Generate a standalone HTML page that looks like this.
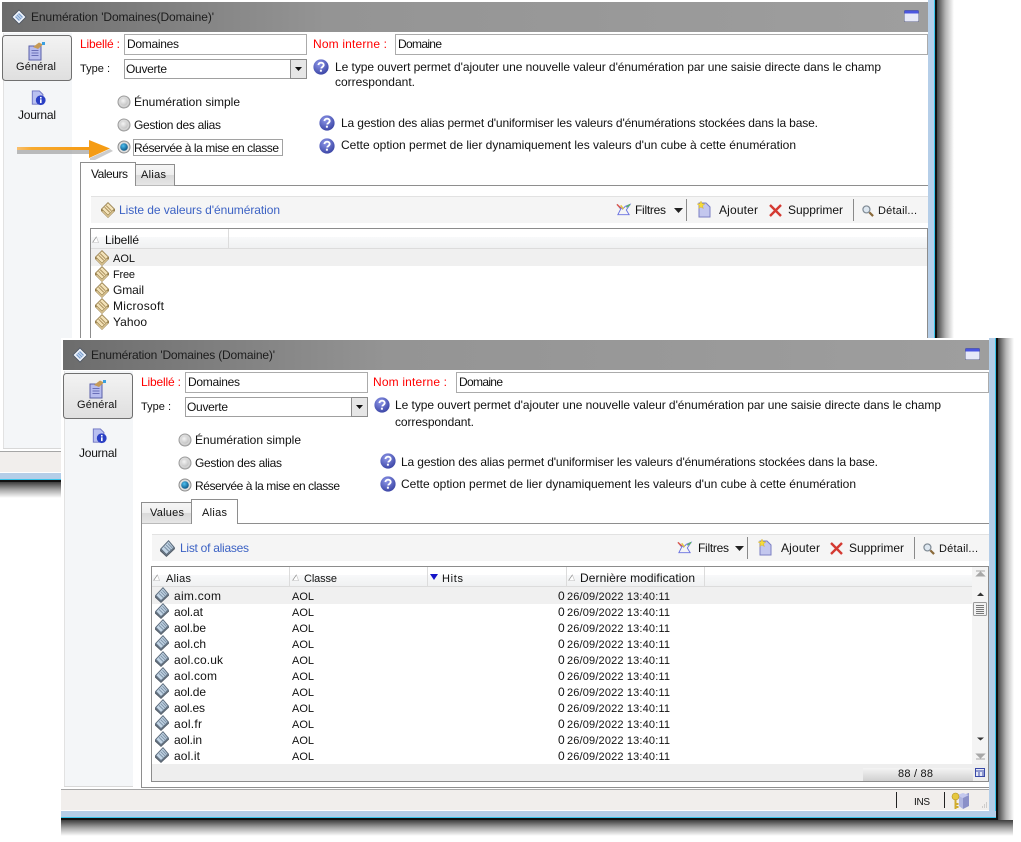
<!DOCTYPE html>
<html lang="fr"><head><meta charset="utf-8"><title>Enumération</title>
<style>
html,body{margin:0;padding:0;background:#fff}
body{width:1021px;height:842px;overflow:hidden}
svg{display:block}
text{font-family:"Liberation Sans",sans-serif;font-size:12px;fill:#111}
text.s{font-size:11px}
.r{fill:#f00}.b{fill:#3c62c4}.t{fill:#1c1c1c}
</style></head><body>
<svg xmlns="http://www.w3.org/2000/svg" width="1021" height="842" viewBox="0 0 1021 842">
<defs>
<linearGradient id="title"><stop offset="0" stop-color="#6c6c6c"/><stop offset=".35" stop-color="#949494"/><stop offset="1" stop-color="#9e9e9e"/></linearGradient>
<linearGradient id="shR"><stop offset="0" stop-color="#454545"/><stop offset=".5" stop-color="#b5b5b5"/><stop offset="1" stop-color="#fff"/></linearGradient>
<linearGradient id="shB" x2="0" y2="1"><stop offset="0" stop-color="#3c3c3c"/><stop offset=".5" stop-color="#aaa"/><stop offset="1" stop-color="#fff"/></linearGradient>
<linearGradient id="btn" x2="0" y2="1"><stop offset="0" stop-color="#f3f3f3"/><stop offset="1" stop-color="#dfdfdf"/></linearGradient>
<linearGradient id="tab" x2="0" y2="1"><stop offset="0" stop-color="#f6f6f6"/><stop offset=".5" stop-color="#eee"/><stop offset=".5" stop-color="#d9d9d9"/><stop offset="1" stop-color="#e6e6e6"/></linearGradient>
<linearGradient id="hdr" x2="0" y2="1"><stop offset="0" stop-color="#f8f9fa"/><stop offset="1" stop-color="#f0f1f2"/></linearGradient>
<linearGradient id="ctr" x2="0" y2="1"><stop offset="0" stop-color="#f4f4f4"/><stop offset="1" stop-color="#d0d0d0"/></linearGradient>
<radialGradient id="help" cx=".4" cy=".3" r=".8"><stop offset="0" stop-color="#8d96e8"/><stop offset="1" stop-color="#323c9e"/></radialGradient>
<radialGradient id="rad" cx=".4" cy=".35" r=".75"><stop offset="0" stop-color="#f4f4f4"/><stop offset="1" stop-color="#b8b8b8"/></radialGradient>
<radialGradient id="radOn" cx=".4" cy=".35" r=".7"><stop offset="0" stop-color="#4fc0f0"/><stop offset="1" stop-color="#064f80"/></radialGradient>
<linearGradient id="arrow"><stop offset="0" stop-color="#f8c070"/><stop offset=".2" stop-color="#f7aa30"/><stop offset="1" stop-color="#f59a12"/></linearGradient>

<symbol id="hlp" viewBox="0 0 16 16" overflow="visible">
<circle cx="8" cy="8" r="7.600" fill="url(#help)"/>
<path d="M5.400 6.100C5.500 4.500 6.700 3.700 8.100 3.700c1.500 0 2.600.9 2.600 2.200 0 1.100-.7 1.600-1.400 2.100-.6.4-.9.7-.9 1.500" fill="none" stroke="#fff" stroke-width="1.900"/>
<rect x="6.900" y="10.700" width="2" height="2" fill="#fff"/>
</symbol>
<symbol id="gold" viewBox="0 0 14 16" overflow="visible">
<path d="M7 0 14 7 14 9 7 16 0 9 0 7z" fill="#97804f"/>
<path d="M7 1.200 12.800 7 7 12.800 1.200 7z" fill="#f3e2b8"/>
<path d="M1.500 9 7 14.500 12.500 9" fill="none" stroke="#e8d3a0"/>
<path d="M3.600 5.200 8.800 10.400M5.200 3.600 10.400 8.800" stroke="#a98f5c"/>
</symbol>
<symbol id="blue" viewBox="0 0 14 16" overflow="visible">
<path d="M0 8.500 6 14.500 14 7 14 8.500 6 16 0 10.500z" fill="#515c68"/>
<path d="M8 0 14 7 6 14.500 0 8.500z" fill="#5b6b7c"/>
<path d="M8 1.400 12.600 7 6 13 1.400 8.400z" fill="#c2d4e4"/>
<path d="M4 6.400 8.700 11M5.700 4.700 10.400 9.300M7.400 3.200 11.600 7.600" stroke="#7e93a8"/>
</symbol>
<symbol id="tdi" viewBox="0 0 14 14" overflow="visible">
<path d="M7 0 14 7 7 14 0 7z" fill="#eef3fb" stroke="#4a5361" stroke-width=".8"/>
<path d="M7 3 11 7 7 11 3 7z" fill="#7ea2d0"/>
<path d="M4.500 6 8 9.500M6 4.500 9.500 8" stroke="#e6eefa" stroke-width=".8"/>
</symbol>
<symbol id="gen" viewBox="0 0 18 20" overflow="visible">
<rect x="1" y="5" width="12" height="14" fill="#b7bcee" stroke="#5a5fa8"/>
<path d="M3.500 9.500h7M3.500 12h7M3.500 14.500h7" stroke="#6a6fb8"/>
<path d="M5 6 11 1.500 15 3.500 10 8z" fill="#c69a55"/>
<rect x="14" y="1" width="3" height="3" fill="#3aa0e0"/>
</symbol>
<symbol id="jrn" viewBox="0 0 16 18" overflow="visible">
<path d="M1 1h8l4 4v11H1z" fill="#b9c0f0" stroke="#6a70c0"/>
<circle cx="10.500" cy="11.500" r="5.500" fill="#2a3fc4"/>
<rect x="9.700" y="10.500" width="1.800" height="4.200" fill="#fff"/><rect x="9.700" y="7.800" width="1.800" height="1.800" fill="#fff"/>
</symbol>
<symbol id="flt" viewBox="0 0 16 14" overflow="visible">
<path d="M1 1 7 6 10 3 15 1 11 7 14 12H2L5 6z" fill="none" stroke="#6a72e0"/>
<path d="M1 1 5 5" stroke="#e05a4a" stroke-width="1.500"/><path d="M5 2 8 6" stroke="#e9c73a" stroke-width="1.500"/><path d="M11 4 15 1" stroke="#5cb85c" stroke-width="1.500"/>
</symbol>
<symbol id="add" viewBox="0 0 14 17" overflow="visible">
<path d="M2 2h7l4 4v10H2z" fill="#c3c7ee" stroke="#7c80c4"/>
<path d="M4 0 5 2.500 7.800 3 5.600 4.700 6.300 7.500 4 6 1.700 7.500 2.400 4.700 .2 3 3 2.500z" fill="#f6dc38" stroke="#c9a52a" stroke-width=".4"/>
</symbol>
<symbol id="del" viewBox="0 0 13 13" overflow="visible">
<path d="M1 1 12 12M12 1 1 12" stroke="#d43a32" stroke-width="2.400"/>
</symbol>
<symbol id="mag" viewBox="0 0 13 13" overflow="visible">
<circle cx="4.800" cy="4.800" r="3.800" fill="#dde7f0" stroke="#7f8a94" stroke-width="1.300"/>
<path d="M8 8 12 12" stroke="#8a6a3a" stroke-width="2.400"/>
</symbol>
<symbol id="rd0" viewBox="0 0 14 14" overflow="visible"><circle cx="7" cy="7" r="6" fill="url(#rad)" stroke="#9b9b9b"/><circle cx="7" cy="7" r="4.300" fill="url(#rad)" stroke="#d8d8d8"/></symbol>
<symbol id="rd1" viewBox="0 0 14 14" overflow="visible"><circle cx="7" cy="7" r="6" fill="#ddd" stroke="#8d8d8d"/><circle cx="7" cy="7" r="3.800" fill="url(#radOn)"/></symbol>
<symbol id="sort" viewBox="0 0 8 8" overflow="visible"><path d="M.5 7.500H7.500L5 1z" fill="#fff" stroke="#c8c8c8" stroke-width=".8"/><path d="M1 7 5 1" stroke="#888" stroke-width=".7"/></symbol>

<g id="frame">
<rect x="2" y="2" width="926" height="30" fill="url(#title)"/>
<use href="#tdi" x="12" y="10" width="14" height="14"/>
<g transform="translate(904 10)"><rect width="15" height="12" rx="1.500" fill="#5a5f80"/><rect x=".5" y=".5" width="14" height="11" rx="1" fill="#e6e8f8"/><rect x=".5" y=".5" width="14" height="3" fill="#4a55e0"/></g>
<rect x="3" y="33" width="69" height="416" fill="#f4f6f8"/>
<rect x="3" y="33" width="1" height="416" fill="#e2e2e2"/>
<rect x="3" y="448" width="69" height="1" fill="#d8d8d8"/>
<rect x="2.500" y="35.500" width="69" height="45" rx="3" fill="url(#btn)" stroke="#707070"/>
<use href="#gen" x="28" y="41" width="18" height="20"/>
<use href="#jrn" x="31" y="90" width="15" height="16"/>
<rect x="124.500" y="34.500" width="182" height="20" fill="#fff" stroke="#ababab"/>
<rect x="395.500" y="34.500" width="532" height="20" fill="#fff" stroke="#ababab"/>
<rect x="124.500" y="59.500" width="182" height="19" fill="#fff" stroke="#a0a0a0"/>
<rect x="290.500" y="59.500" width="16" height="19" fill="#e6e6e6" stroke="#8c8c8c"/>
<path d="M295 67h7l-3.500 4z" fill="#111"/>
<use href="#hlp" x="313" y="59" width="16" height="16"/>
<use href="#hlp" x="319" y="115" width="16" height="16"/>
<use href="#hlp" x="319" y="138" width="16" height="16"/>
<use href="#rd0" x="117" y="95" width="14" height="14"/>
<use href="#rd0" x="117" y="118" width="14" height="14"/>
<use href="#rd1" x="117" y="140" width="14" height="14"/>
<path d="M80.500 449.500V185.500H928" fill="none" stroke="#8e8e8e"/>
<rect x="91" y="196" width="837" height="27" fill="#f5f5f5"/><rect x="91" y="196" width="837" height="1" fill="#e2e2e2"/>
<use href="#flt" x="616" y="203" width="15" height="14"/>
<path d="M674 208h9l-4.500 5z" fill="#222"/>
<rect x="686" y="199" width="1" height="22" fill="#8a8a8a"/>
<use href="#add" x="697" y="201" width="14" height="17"/>
<use href="#del" x="769" y="204" width="13" height="13"/>
<rect x="853" y="199" width="1" height="22" fill="#8a8a8a"/>
<use href="#mag" x="862" y="205" width="12" height="12"/>
</g>
</defs>

<!-- Window 1 -->
<rect x="928" y="0" width="7" height="480" fill="#b5cee8"/><rect x="934" y="0" width="1" height="480" fill="#39c4ea"/>
<rect x="935" y="0" width="2" height="481" fill="#111"/>
<rect x="937" y="0" width="17" height="340" fill="url(#shR)"/>
<use href="#frame"/>
<rect x="90.500" y="228.500" width="837" height="130" fill="#fff" stroke="#8c8c8c"/>
<rect x="91" y="237" width="836" height="11" fill="url(#hdr)"/>
<rect x="91" y="248" width="836" height="1" fill="#dcdcdc"/>
<text class="t" x="31" y="21" textLength="183">Enumération 'Domaines(Domaine)'</text>
<text class="s" x="16" y="70" textLength="40">Général</text>
<text x="18" y="119" textLength="38">Journal</text>
<text class="r" x="80" y="48" textLength="40">Libellé :</text>
<text x="127" y="48" textLength="52">Domaines</text>
<text class="r" x="313" y="48" textLength="74">Nom interne :</text>
<text x="398" y="48" textLength="44">Domaine</text>
<text class="s" x="80" y="72" textLength="30">Type :</text>
<text x="126" y="73" textLength="41">Ouverte</text>
<text x="335" y="71" textLength="546">Le type ouvert permet d'ajouter une nouvelle valeur d'énumération par une saisie directe dans le champ</text>
<text x="335" y="86" textLength="80">correspondant.</text>
<text x="134" y="106" textLength="106">Énumération simple</text>
<text x="134" y="129" textLength="87">Gestion des alias</text>
<text x="134" y="152" textLength="145">Réservée à la mise en classe</text>
<rect x="133.500" y="139.500" width="149" height="16" fill="none" stroke="#444" stroke-dasharray="1 1" shape-rendering="crispEdges"/>
<text x="341" y="127" textLength="477">La gestion des alias permet d'uniformiser les valeurs d'énumérations stockées dans la base.</text>
<text x="341" y="149" textLength="455">Cette option permet de lier dynamiquement les valeurs d'un cube à cette énumération</text>
<!-- arrow -->
<rect x="17" y="150" width="74" height="4" fill="#9a9a9a" opacity=".65"/>
<path d="M90 158 110 149 113 151 95 160 90 160z" fill="#aaa" opacity=".6"/>
<rect x="17" y="147" width="74" height="3" fill="url(#arrow)"/>
<path d="M89 140 110 148.500 89 158z" fill="#f59c14"/>
<!-- tabs 1 -->
<path d="M135.500 185.500V164.500H174.500V185.500" fill="url(#tab)" stroke="#8e8e8e"/>
<path d="M80.500 185.500V162.500H135.500V185.500" fill="#fff" stroke="#8e8e8e"/>
<rect x="81" y="185" width="54" height="1" fill="#fff"/>
<text x="91" y="178" textLength="37">Valeurs</text>
<text class="s" x="141" y="178" textLength="25">Alias</text>
<use href="#gold" x="101" y="202" width="14" height="16"/>
<text class="b" x="119" y="214" textLength="161">Liste de valeurs d'énumération</text>
<text x="635" y="214" textLength="31">Filtres</text>
<text x="719" y="214" textLength="39">Ajouter</text>
<text x="788" y="214" textLength="55">Supprimer</text>
<text class="s" x="878" y="214" textLength="39">Détail...</text>
<use href="#sort" x="92" y="236" width="7" height="7"/>
<text x="105" y="244" textLength="34">Libellé</text>
<rect x="228" y="229" width="1" height="19" fill="#dcdcdc"/>
<rect x="91" y="249" width="836" height="17" fill="#f0f0f0"/>
<use href="#gold" x="95" y="250" width="14" height="16"/>
<use href="#gold" x="95" y="266" width="14" height="16"/>
<use href="#gold" x="95" y="282" width="14" height="16"/>
<use href="#gold" x="95" y="298" width="14" height="16"/>
<use href="#gold" x="95" y="314" width="14" height="16"/>
<text class="s" x="113" y="262" textLength="22">AOL</text>
<text class="s" x="113" y="278" textLength="22">Free</text>
<text x="113" y="294" textLength="31">Gmail</text>
<text x="113" y="310" textLength="51">Microsoft</text>
<text x="113" y="326" textLength="34">Yahoo</text>
<!-- win 1 bottom -->
<rect x="0" y="451" width="61" height="1" fill="#a6a6a6"/>
<rect x="0" y="452" width="61" height="20" fill="#f1eeec"/>
<rect x="0" y="473" width="61" height="6" fill="#b5cee8"/>
<rect x="0" y="479" width="61" height="1" fill="#39c4ea"/>
<rect x="0" y="480" width="61" height="2" fill="#111"/>
<rect x="0" y="482" width="61" height="16" fill="url(#shB)"/>

<!-- Window 2 -->
<rect x="61" y="338" width="936" height="480" fill="#fff"/>
<rect x="998" y="338" width="16" height="482" fill="url(#shR)"/>
<rect x="989" y="338" width="7" height="480" fill="#b5cee8"/><rect x="995" y="338" width="1" height="480" fill="#39c4ea"/>
<rect x="996" y="338" width="2" height="481" fill="#111"/>
<rect x="61" y="820" width="952" height="16" fill="url(#shB)"/>
<g transform="translate(61 338)"><use href="#frame"/></g>
<rect x="141" y="787" width="848" height="1" fill="#8e8e8e"/>
<rect x="151.500" y="566.500" width="837" height="215" fill="#fff" stroke="#8c8c8c"/>
<rect x="152" y="575" width="820" height="11" fill="url(#hdr)"/>
<rect x="152" y="586" width="820" height="1" fill="#dcdcdc"/>
<text class="t" x="91" y="359" textLength="184">Enumération 'Domaines (Domaine)'</text>
<text class="s" x="77" y="408" textLength="40">Général</text>
<text x="79" y="457" textLength="38">Journal</text>
<text class="r" x="141" y="386" textLength="40">Libellé :</text>
<text x="188" y="386" textLength="52">Domaines</text>
<text class="r" x="373" y="386" textLength="74">Nom interne :</text>
<text x="459" y="386" textLength="44">Domaine</text>
<text class="s" x="141" y="410" textLength="30">Type :</text>
<text x="187" y="411" textLength="41">Ouverte</text>
<text x="395" y="409" textLength="546">Le type ouvert permet d'ajouter une nouvelle valeur d'énumération par une saisie directe dans le champ</text>
<text x="395" y="426" textLength="79">correspondant.</text>
<text x="195" y="444" textLength="106">Énumération simple</text>
<text x="195" y="467" textLength="87">Gestion des alias</text>
<text x="195" y="490" textLength="145">Réservée à la mise en classe</text>
<text x="401" y="466" textLength="477">La gestion des alias permet d'uniformiser les valeurs d'énumérations stockées dans la base.</text>
<text x="401" y="488" textLength="455">Cette option permet de lier dynamiquement les valeurs d'un cube à cette énumération</text>
<!-- tabs 2 -->
<rect x="142" y="498" width="846" height="25" fill="#fff"/>
<path d="M141.500 523.500H989" stroke="#8e8e8e" fill="none"/>
<path d="M141.500 523.500V502.500H191.500V523.500" fill="url(#tab)" stroke="#8e8e8e"/>
<path d="M191.500 523.500V499.500H237.500V523.500" fill="#fff" stroke="#8e8e8e"/>
<rect x="192" y="523" width="45" height="1" fill="#fff"/>
<text class="s" x="150" y="516" textLength="34">Values</text>
<text class="s" x="202" y="516" textLength="25">Alias</text>
<use href="#blue" x="160" y="540" width="15" height="17"/>
<text class="b" x="180" y="552" textLength="69">List of aliases</text>
<text x="698" y="552" textLength="31">Filtres</text>
<text x="781" y="552" textLength="39">Ajouter</text>
<text x="849" y="552" textLength="55">Supprimer</text>
<text class="s" x="939" y="552" textLength="39">Détail...</text>
<!-- grid 2 -->
<use href="#sort" x="153" y="574" width="7" height="7"/>
<text class="s" x="166" y="582" textLength="25">Alias</text>
<rect x="289" y="567" width="1" height="19" fill="#dcdcdc"/>
<use href="#sort" x="292" y="574" width="7" height="7"/>
<text class="s" x="304" y="582" textLength="33">Classe</text>
<rect x="427" y="567" width="1" height="19" fill="#dcdcdc"/>
<path d="M430 574h8l-4 6z" fill="#1414c8"/>
<text class="s" x="442" y="582" textLength="21">Hits</text>
<rect x="566" y="567" width="1" height="19" fill="#dcdcdc"/>
<use href="#sort" x="568" y="574" width="7" height="7"/>
<text x="580" y="582" textLength="115">Dernière modification</text>
<rect x="704" y="567" width="1" height="19" fill="#dcdcdc"/>
<rect x="152" y="587" width="820" height="17" fill="#f0f0f0"/>
<rect x="152" y="764" width="836" height="17" fill="#eee"/>
<rect x="863" y="768" width="110" height="13" fill="url(#ctr)"/>
<text class="s" x="898" y="777" textLength="35">88 / 88</text>
<!-- rows -->
<g>
<use href="#blue" x="155" y="587" width="14" height="16"/>
<use href="#blue" x="155" y="603" width="14" height="16"/>
<use href="#blue" x="155" y="619" width="14" height="16"/>
<use href="#blue" x="155" y="635" width="14" height="16"/>
<use href="#blue" x="155" y="651" width="14" height="16"/>
<use href="#blue" x="155" y="667" width="14" height="16"/>
<use href="#blue" x="155" y="683" width="14" height="16"/>
<use href="#blue" x="155" y="699" width="14" height="16"/>
<use href="#blue" x="155" y="715" width="14" height="16"/>
<use href="#blue" x="155" y="731" width="14" height="16"/>
<use href="#blue" x="155" y="747" width="14" height="16"/>
</g>
<g class="rows">
<text x="174" y="600" textLength="47">aim.com</text><text class="s" x="292" y="600" textLength="22">AOL</text><text x="558" y="600">0</text><text class="s" x="567" y="600" textLength="103">26/09/2022 13:40:11</text>
<text x="174" y="616" textLength="29">aol.at</text><text class="s" x="292" y="616" textLength="22">AOL</text><text x="558" y="616">0</text><text class="s" x="567" y="616" textLength="103">26/09/2022 13:40:11</text>
<text x="174" y="632" textLength="32">aol.be</text><text class="s" x="292" y="632" textLength="22">AOL</text><text x="558" y="632">0</text><text class="s" x="567" y="632" textLength="103">26/09/2022 13:40:11</text>
<text x="174" y="648" textLength="32">aol.ch</text><text class="s" x="292" y="648" textLength="22">AOL</text><text x="558" y="648">0</text><text class="s" x="567" y="648" textLength="103">26/09/2022 13:40:11</text>
<text x="174" y="664" textLength="49">aol.co.uk</text><text class="s" x="292" y="664" textLength="22">AOL</text><text x="558" y="664">0</text><text class="s" x="567" y="664" textLength="103">26/09/2022 13:40:11</text>
<text x="174" y="680" textLength="43">aol.com</text><text class="s" x="292" y="680" textLength="22">AOL</text><text x="558" y="680">0</text><text class="s" x="567" y="680" textLength="103">26/09/2022 13:40:11</text>
<text x="174" y="696" textLength="32">aol.de</text><text class="s" x="292" y="696" textLength="22">AOL</text><text x="558" y="696">0</text><text class="s" x="567" y="696" textLength="103">26/09/2022 13:40:11</text>
<text x="174" y="712" textLength="31">aol.es</text><text class="s" x="292" y="712" textLength="22">AOL</text><text x="558" y="712">0</text><text class="s" x="567" y="712" textLength="103">26/09/2022 13:40:11</text>
<text x="174" y="728" textLength="28">aol.fr</text><text class="s" x="292" y="728" textLength="22">AOL</text><text x="558" y="728">0</text><text class="s" x="567" y="728" textLength="103">26/09/2022 13:40:11</text>
<text x="174" y="744" textLength="28">aol.in</text><text class="s" x="292" y="744" textLength="22">AOL</text><text x="558" y="744">0</text><text class="s" x="567" y="744" textLength="103">26/09/2022 13:40:11</text>
<text x="174" y="760" textLength="26">aol.it</text><text class="s" x="292" y="760" textLength="22">AOL</text><text x="558" y="760">0</text><text class="s" x="567" y="760" textLength="103">26/09/2022 13:40:11</text>
</g>
<!-- scrollbar -->
<rect x="972" y="567" width="16" height="197" fill="#f4f4f4"/>
<path d="M976 571h9M980.500 572l-4 4h8z" stroke="#a8a8a8" fill="#a8a8a8"/>
<path d="M977 596h7l-3.500-3.500z" fill="#333"/>
<rect x="973.500" y="602.500" width="13" height="13" rx="1" fill="#f1f1f1" stroke="#9a9a9a"/>
<path d="M976 605.500h8M976 607.500h8M976 609.500h8M976 611.500h8M976 613.500h8" stroke="#777"/>
<path d="M977 737.500h7l-3.500 3z" fill="#333"/>
<path d="M976 759h9M980.500 758l-4-4h8z" stroke="#a8a8a8" fill="#a8a8a8"/>
<rect x="975.500" y="768.500" width="9" height="8" fill="#e4e8f8" stroke="#3a4aa8"/><path d="M976 771h9M978 773h2M982 773h2M978 775h2M982 775h2" stroke="#3a4aa8"/>
<!-- status -->
<rect x="61" y="788" width="928" height="1" fill="#fff"/>
<rect x="61" y="789" width="928" height="1" fill="#a6a6a6"/>
<rect x="61" y="790" width="928" height="20" fill="#f1eeec"/>
<rect x="61" y="810" width="928" height="1" fill="#fff"/>
<rect x="61" y="811" width="935" height="6" fill="#b5cee8"/>
<rect x="61" y="817" width="935" height="1" fill="#39c4ea"/>
<rect x="61" y="818" width="937" height="2" fill="#111"/>
<rect x="896" y="792" width="1" height="16" fill="#222"/>
<rect x="944" y="792" width="1" height="16" fill="#222"/>
<text x="914" y="805" textLength="16" style="font-size:10px">INS</text>
<path d="M963 795 969 793 969 806 963 809z" fill="#8b90c8"/><path d="M957 795 963 793 969 795 963 798z" fill="#c4c8ee"/><path d="M959 796 963 798V809L959 806z" fill="#b0b5e0"/>
<circle cx="955.500" cy="796.500" r="3.500" fill="#e6c840" stroke="#b09020" stroke-width=".6"/>
<path d="M955.500 799V809M955.500 804h3M955.500 807h3" stroke="#d0ac30" stroke-width="2"/>
<path d="M986 803h1M984 805h1M986 805h1M982 807h1M984 807h1M986 807h1" stroke="#aaa"/>
</svg>
</body></html>
